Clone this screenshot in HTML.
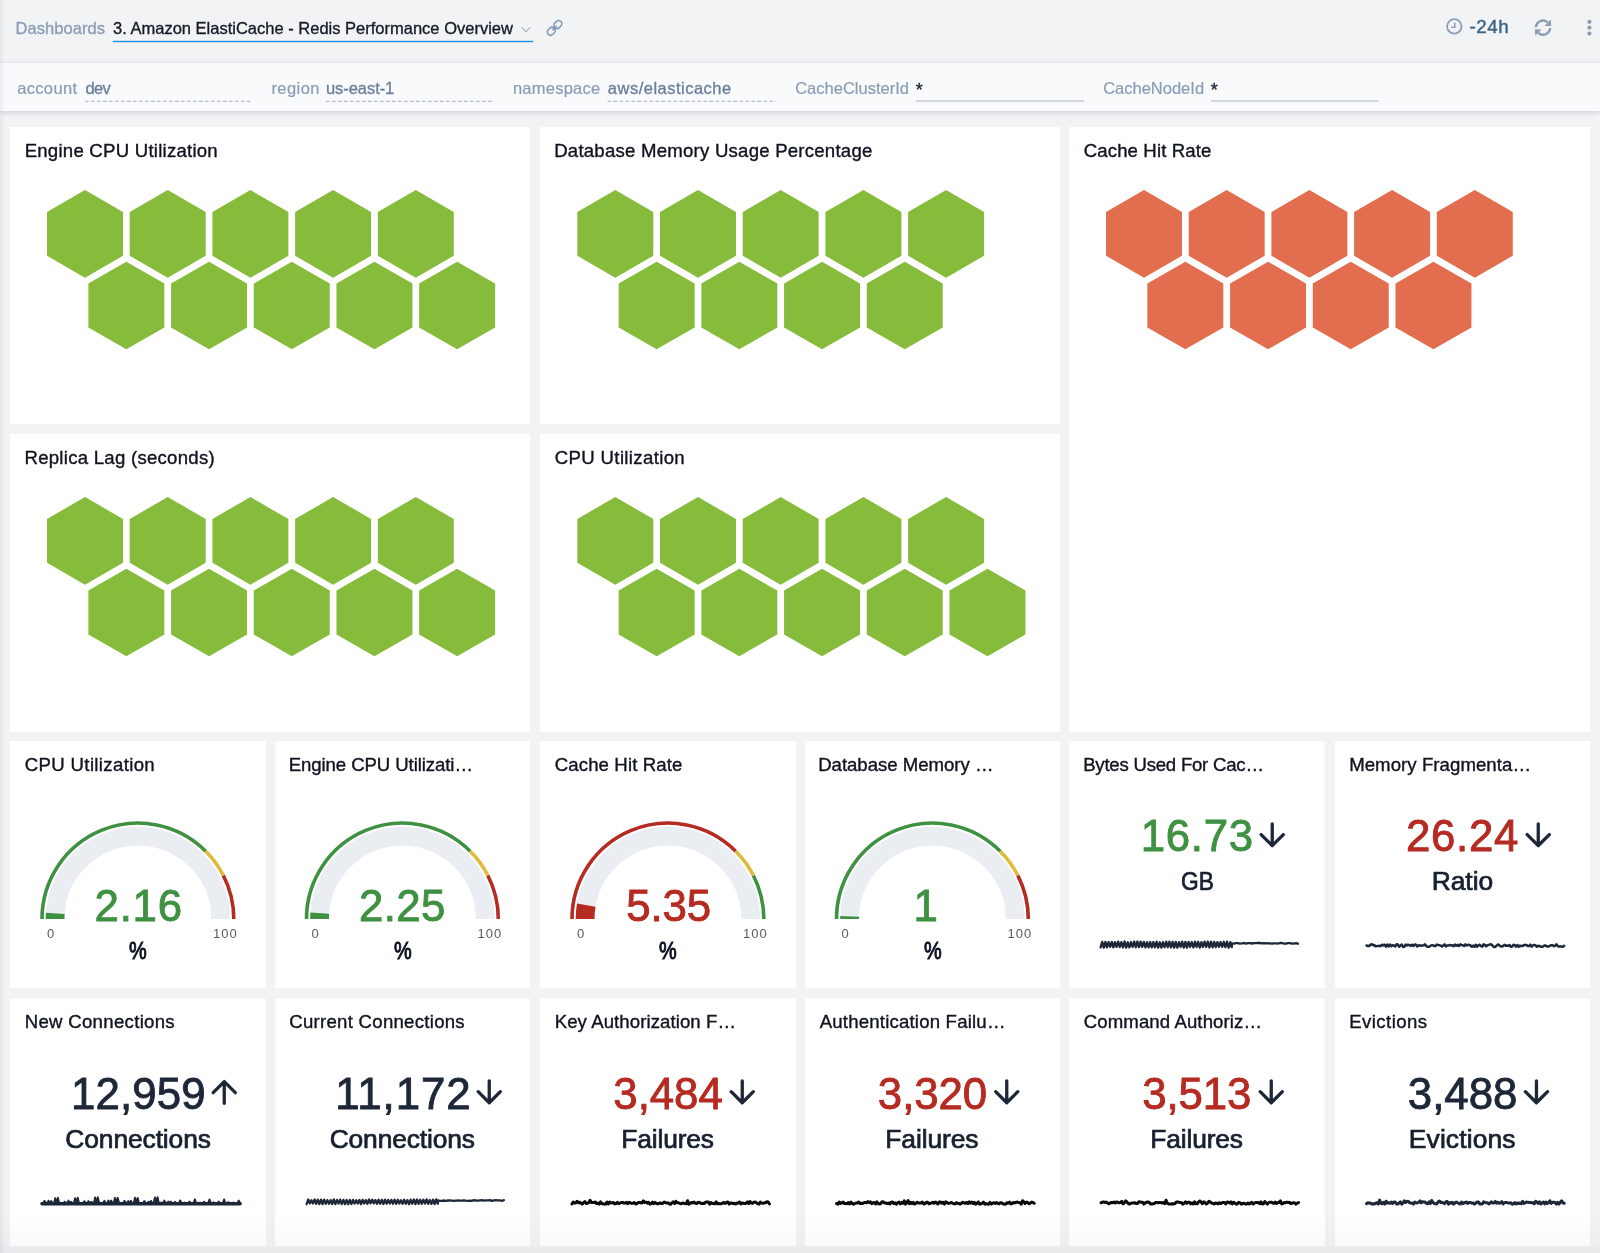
<!DOCTYPE html>
<html lang="en"><head><meta charset="utf-8"><title>3. Amazon ElastiCache - Redis Performance Overview</title>
<style>
*{box-sizing:border-box}
html,body{margin:0;padding:0}
body{width:1600px;height:1253px;overflow:hidden;background:#f1f3f5;font-family:'Liberation Sans', sans-serif;position:relative}
.t{position:absolute;white-space:nowrap;line-height:1;margin:0;font-weight:400}
#app{position:absolute;left:0;top:0;width:1600px;height:1253px;overflow:hidden;will-change:transform}
.topbar{position:absolute;left:0;top:0;width:1600px;height:62px;background:#f2f3f5}
.topbar svg,.filters svg{position:absolute;left:0;top:0;overflow:visible}
.filters{position:absolute;left:0;top:62px;width:1600px;height:49px;background:#f9fafc;border-top:1px solid #e3e7ea;box-shadow:0 1.5px 5px rgba(60,75,90,.21)}
.panel{position:absolute;background:#fff;overflow:hidden}
.r4{box-shadow:0 -1px 0 rgba(255,255,255,.5)}
.r3{box-shadow:0 1px 0 rgba(255,255,255,.35)}
.panel svg{position:absolute;left:0;top:0;overflow:visible}
.edge-l{position:absolute;left:0;top:0;width:5px;height:1253px;background:linear-gradient(90deg,rgba(95,100,110,.085),rgba(95,100,110,0))}
.edge-b{position:absolute;left:0;top:1208px;width:1600px;height:38px;background:linear-gradient(180deg,rgba(120,130,140,0),rgba(120,130,140,.04))}
.foot{position:absolute;left:0;top:1246px;width:1600px;height:7px;background:#e9ebed}
svg{display:block}
</style></head>
<body>
<div id="app">
<section class="panel" style="left:10px;top:127px;width:520px;height:297px">
<h3 class="t" style="left:14.67px;top:15px;font-size:18.6px;color:#10141f;-webkit-text-stroke:0.37px;letter-spacing:0.235px;">Engine CPU Utilization</h3>
<svg width="520" height="297" viewBox="0 0 520 297"><g fill="#87bb3b">
<polygon points="75.00,63.05 112.98,84.98 112.98,128.82 75.00,150.75 37.02,128.82 37.02,84.97"/>
<polygon points="157.70,63.05 195.68,84.98 195.68,128.82 157.70,150.75 119.72,128.82 119.72,84.97"/>
<polygon points="240.40,63.05 278.38,84.98 278.38,128.82 240.40,150.75 202.42,128.82 202.42,84.97"/>
<polygon points="323.10,63.05 361.08,84.98 361.08,128.82 323.10,150.75 285.12,128.82 285.12,84.97"/>
<polygon points="405.80,63.05 443.78,84.98 443.78,128.82 405.80,150.75 367.82,128.82 367.82,84.97"/>
<polygon points="116.35,134.65 154.33,156.57 154.33,200.43 116.35,222.35 78.37,200.43 78.37,156.57"/>
<polygon points="199.05,134.65 237.03,156.57 237.03,200.43 199.05,222.35 161.07,200.43 161.07,156.57"/>
<polygon points="281.75,134.65 319.73,156.57 319.73,200.43 281.75,222.35 243.77,200.43 243.77,156.57"/>
<polygon points="364.45,134.65 402.43,156.57 402.43,200.43 364.45,222.35 326.47,200.43 326.47,156.57"/>
<polygon points="447.15,134.65 485.13,156.57 485.13,200.43 447.15,222.35 409.17,200.43 409.17,156.57"/>
</g></svg>
</section>
<section class="panel" style="left:540px;top:127px;width:520px;height:297px">
<h3 class="t" style="left:14.17px;top:15px;font-size:18.6px;color:#10141f;-webkit-text-stroke:0.37px;letter-spacing:0.228px;">Database Memory Usage Percentage</h3>
<svg width="520" height="297" viewBox="0 0 520 297"><g fill="#87bb3b">
<polygon points="75.30,63.05 113.28,84.98 113.28,128.82 75.30,150.75 37.32,128.82 37.32,84.97"/>
<polygon points="158.00,63.05 195.98,84.98 195.98,128.82 158.00,150.75 120.02,128.82 120.02,84.97"/>
<polygon points="240.70,63.05 278.68,84.98 278.68,128.82 240.70,150.75 202.72,128.82 202.72,84.97"/>
<polygon points="323.40,63.05 361.38,84.98 361.38,128.82 323.40,150.75 285.42,128.82 285.42,84.97"/>
<polygon points="406.10,63.05 444.08,84.98 444.08,128.82 406.10,150.75 368.12,128.82 368.12,84.97"/>
<polygon points="116.65,134.65 154.63,156.57 154.63,200.43 116.65,222.35 78.67,200.43 78.67,156.57"/>
<polygon points="199.35,134.65 237.33,156.57 237.33,200.43 199.35,222.35 161.37,200.43 161.37,156.57"/>
<polygon points="282.05,134.65 320.03,156.57 320.03,200.43 282.05,222.35 244.07,200.43 244.07,156.57"/>
<polygon points="364.75,134.65 402.73,156.57 402.73,200.43 364.75,222.35 326.77,200.43 326.77,156.57"/>
</g></svg>
</section>
<section class="panel" style="left:1069px;top:127px;width:521px;height:605px">
<h3 class="t" style="left:14.76px;top:15px;font-size:18.6px;color:#10141f;-webkit-text-stroke:0.37px;letter-spacing:0.114px;">Cache Hit Rate</h3>
<svg width="521" height="605" viewBox="0 0 521 605"><g fill="#e26e4f">
<polygon points="75.00,63.05 112.98,84.98 112.98,128.82 75.00,150.75 37.02,128.82 37.02,84.97"/>
<polygon points="157.70,63.05 195.68,84.98 195.68,128.82 157.70,150.75 119.72,128.82 119.72,84.97"/>
<polygon points="240.40,63.05 278.38,84.98 278.38,128.82 240.40,150.75 202.42,128.82 202.42,84.97"/>
<polygon points="323.10,63.05 361.08,84.98 361.08,128.82 323.10,150.75 285.12,128.82 285.12,84.97"/>
<polygon points="405.80,63.05 443.78,84.98 443.78,128.82 405.80,150.75 367.82,128.82 367.82,84.97"/>
<polygon points="116.35,134.65 154.33,156.57 154.33,200.43 116.35,222.35 78.37,200.43 78.37,156.57"/>
<polygon points="199.05,134.65 237.03,156.57 237.03,200.43 199.05,222.35 161.07,200.43 161.07,156.57"/>
<polygon points="281.75,134.65 319.73,156.57 319.73,200.43 281.75,222.35 243.77,200.43 243.77,156.57"/>
<polygon points="364.45,134.65 402.43,156.57 402.43,200.43 364.45,222.35 326.47,200.43 326.47,156.57"/>
</g></svg>
</section>
<section class="panel" style="left:10px;top:434px;width:520px;height:298px">
<h3 class="t" style="left:14.47px;top:15px;font-size:18.6px;color:#10141f;-webkit-text-stroke:0.37px;letter-spacing:0.258px;">Replica Lag (seconds)</h3>
<svg width="520" height="298" viewBox="0 0 520 298"><g fill="#87bb3b">
<polygon points="75.00,63.05 112.98,84.98 112.98,128.82 75.00,150.75 37.02,128.82 37.02,84.97"/>
<polygon points="157.70,63.05 195.68,84.98 195.68,128.82 157.70,150.75 119.72,128.82 119.72,84.97"/>
<polygon points="240.40,63.05 278.38,84.98 278.38,128.82 240.40,150.75 202.42,128.82 202.42,84.97"/>
<polygon points="323.10,63.05 361.08,84.98 361.08,128.82 323.10,150.75 285.12,128.82 285.12,84.97"/>
<polygon points="405.80,63.05 443.78,84.98 443.78,128.82 405.80,150.75 367.82,128.82 367.82,84.97"/>
<polygon points="116.35,134.65 154.33,156.57 154.33,200.43 116.35,222.35 78.37,200.43 78.37,156.57"/>
<polygon points="199.05,134.65 237.03,156.57 237.03,200.43 199.05,222.35 161.07,200.43 161.07,156.57"/>
<polygon points="281.75,134.65 319.73,156.57 319.73,200.43 281.75,222.35 243.77,200.43 243.77,156.57"/>
<polygon points="364.45,134.65 402.43,156.57 402.43,200.43 364.45,222.35 326.47,200.43 326.47,156.57"/>
<polygon points="447.15,134.65 485.13,156.57 485.13,200.43 447.15,222.35 409.17,200.43 409.17,156.57"/>
</g></svg>
</section>
<section class="panel" style="left:540px;top:434px;width:520px;height:298px">
<h3 class="t" style="left:14.76px;top:15px;font-size:18.6px;color:#10141f;-webkit-text-stroke:0.37px;letter-spacing:0.352px;">CPU Utilization</h3>
<svg width="520" height="298" viewBox="0 0 520 298"><g fill="#87bb3b">
<polygon points="75.30,63.05 113.28,84.98 113.28,128.82 75.30,150.75 37.32,128.82 37.32,84.97"/>
<polygon points="158.00,63.05 195.98,84.98 195.98,128.82 158.00,150.75 120.02,128.82 120.02,84.97"/>
<polygon points="240.70,63.05 278.68,84.98 278.68,128.82 240.70,150.75 202.72,128.82 202.72,84.97"/>
<polygon points="323.40,63.05 361.38,84.98 361.38,128.82 323.40,150.75 285.42,128.82 285.42,84.97"/>
<polygon points="406.10,63.05 444.08,84.98 444.08,128.82 406.10,150.75 368.12,128.82 368.12,84.97"/>
<polygon points="116.65,134.65 154.63,156.57 154.63,200.43 116.65,222.35 78.67,200.43 78.67,156.57"/>
<polygon points="199.35,134.65 237.33,156.57 237.33,200.43 199.35,222.35 161.37,200.43 161.37,156.57"/>
<polygon points="282.05,134.65 320.03,156.57 320.03,200.43 282.05,222.35 244.07,200.43 244.07,156.57"/>
<polygon points="364.75,134.65 402.73,156.57 402.73,200.43 364.75,222.35 326.77,200.43 326.77,156.57"/>
<polygon points="447.45,134.65 485.43,156.57 485.43,200.43 447.45,222.35 409.47,200.43 409.47,156.57"/>
</g></svg>
</section>
<section class="panel r3" style="left:10px;top:741px;width:256px;height:247px">
<h3 class="t" style="left:14.76px;top:15px;font-size:18.6px;color:#10141f;-webkit-text-stroke:0.37px;letter-spacing:0.352px;">CPU Utilization</h3>
<svg width="256" height="247" viewBox="0 0 256 247">
<path d="M45.10 178.00A82.8 82.8 0 0 1 210.70 178.00" fill="none" stroke="#eaedf1" stroke-width="18.8"/>
<path d="M32.00 178.00A95.9 95.9 0 0 1 195.71 110.19" fill="none" stroke="#3f9142" stroke-width="3.6"/>
<path d="M195.71 110.19A95.9 95.9 0 0 1 213.35 134.46" fill="none" stroke="#dfba3d" stroke-width="3.6"/>
<path d="M213.35 134.46A95.9 95.9 0 0 1 223.80 178.00" fill="none" stroke="#b52a21" stroke-width="3.6"/>
<path d="M45.10 178.00A82.8 82.8 0 0 1 45.29 172.39" fill="none" stroke="#3f9142" stroke-width="18.8"/>
</svg>
<div class="t val" style="left:84.60px;top:143px;font-size:43.8px;color:#3f9142;-webkit-text-stroke:0.88px;letter-spacing:0.726px;">2.16</div>
<div class="t" style="left:36.89px;top:186px;font-size:13px;color:#5a5a5a;">0</div>
<div class="t" style="left:203.01px;top:186px;font-size:13px;color:#5a5a5a;letter-spacing:0.997px;">100</div>
<div class="t" style="left:119.19px;top:198px;font-size:24.6px;color:#0c1120;-webkit-text-stroke:0.98px;transform:scaleX(0.810);transform-origin:0 0;">%</div>
</section>
<section class="panel r3" style="left:275px;top:741px;width:255px;height:247px">
<h3 class="t" style="left:13.67px;top:15px;font-size:18.6px;color:#10141f;-webkit-text-stroke:0.37px;letter-spacing:-0.083px;">Engine CPU Utilizati&hellip;</h3>
<svg width="255" height="247" viewBox="0 0 255 247">
<path d="M44.60 178.00A82.8 82.8 0 0 1 210.20 178.00" fill="none" stroke="#eaedf1" stroke-width="18.8"/>
<path d="M31.50 178.00A95.9 95.9 0 0 1 195.21 110.19" fill="none" stroke="#3f9142" stroke-width="3.6"/>
<path d="M195.21 110.19A95.9 95.9 0 0 1 212.85 134.46" fill="none" stroke="#dfba3d" stroke-width="3.6"/>
<path d="M212.85 134.46A95.9 95.9 0 0 1 223.30 178.00" fill="none" stroke="#b52a21" stroke-width="3.6"/>
<path d="M44.60 178.00A82.8 82.8 0 0 1 44.81 172.15" fill="none" stroke="#3f9142" stroke-width="18.8"/>
</svg>
<div class="t val" style="left:84.10px;top:143px;font-size:43.8px;color:#3f9142;-webkit-text-stroke:0.88px;letter-spacing:0.331px;">2.25</div>
<div class="t" style="left:36.39px;top:186px;font-size:13px;color:#5a5a5a;">0</div>
<div class="t" style="left:202.51px;top:186px;font-size:13px;color:#5a5a5a;letter-spacing:0.997px;">100</div>
<div class="t" style="left:118.69px;top:198px;font-size:24.6px;color:#0c1120;-webkit-text-stroke:0.98px;transform:scaleX(0.810);transform-origin:0 0;">%</div>
</section>
<section class="panel r3" style="left:540px;top:741px;width:256px;height:247px">
<h3 class="t" style="left:14.76px;top:15px;font-size:18.6px;color:#10141f;-webkit-text-stroke:0.37px;letter-spacing:0.114px;">Cache Hit Rate</h3>
<svg width="256" height="247" viewBox="0 0 256 247">
<path d="M45.10 178.00A82.8 82.8 0 0 1 210.70 178.00" fill="none" stroke="#eaedf1" stroke-width="18.8"/>
<path d="M32.00 178.00A95.9 95.9 0 0 1 195.71 110.19" fill="none" stroke="#b52a21" stroke-width="3.6"/>
<path d="M195.71 110.19A95.9 95.9 0 0 1 213.35 134.46" fill="none" stroke="#dfba3d" stroke-width="3.6"/>
<path d="M213.35 134.46A95.9 95.9 0 0 1 223.80 178.00" fill="none" stroke="#3f9142" stroke-width="3.6"/>
<path d="M45.10 178.00A82.8 82.8 0 0 1 46.27 164.15" fill="none" stroke="#b52a21" stroke-width="18.8"/>
</svg>
<div class="t val" style="left:86.15px;top:143px;font-size:43.8px;color:#b52a21;-webkit-text-stroke:0.88px;letter-spacing:-0.086px;">5.35</div>
<div class="t" style="left:36.89px;top:186px;font-size:13px;color:#5a5a5a;">0</div>
<div class="t" style="left:203.01px;top:186px;font-size:13px;color:#5a5a5a;letter-spacing:0.997px;">100</div>
<div class="t" style="left:119.19px;top:198px;font-size:24.6px;color:#0c1120;-webkit-text-stroke:0.98px;transform:scaleX(0.810);transform-origin:0 0;">%</div>
</section>
<section class="panel r3" style="left:805px;top:741px;width:255px;height:247px">
<h3 class="t" style="left:13.17px;top:15px;font-size:18.6px;color:#10141f;-webkit-text-stroke:0.37px;letter-spacing:-0.020px;">Database Memory &hellip;</h3>
<svg width="255" height="247" viewBox="0 0 255 247">
<path d="M44.60 178.00A82.8 82.8 0 0 1 210.20 178.00" fill="none" stroke="#eaedf1" stroke-width="18.8"/>
<path d="M31.50 178.00A95.9 95.9 0 0 1 195.21 110.19" fill="none" stroke="#3f9142" stroke-width="3.6"/>
<path d="M195.21 110.19A95.9 95.9 0 0 1 212.85 134.46" fill="none" stroke="#dfba3d" stroke-width="3.6"/>
<path d="M212.85 134.46A95.9 95.9 0 0 1 223.30 178.00" fill="none" stroke="#b52a21" stroke-width="3.6"/>
<path d="M44.60 178.00A82.8 82.8 0 0 1 44.64 175.40" fill="none" stroke="#3f9142" stroke-width="18.8"/>
</svg>
<div class="t val" style="left:108.56px;top:143px;font-size:43.8px;color:#3f9142;-webkit-text-stroke:0.88px;">1</div>
<div class="t" style="left:36.39px;top:186px;font-size:13px;color:#5a5a5a;">0</div>
<div class="t" style="left:202.51px;top:186px;font-size:13px;color:#5a5a5a;letter-spacing:0.997px;">100</div>
<div class="t" style="left:118.69px;top:198px;font-size:24.6px;color:#0c1120;-webkit-text-stroke:0.98px;transform:scaleX(0.810);transform-origin:0 0;">%</div>
</section>
<section class="panel r3" style="left:1069px;top:741px;width:256px;height:247px">
<h3 class="t" style="left:14.17px;top:15px;font-size:18.6px;color:#10141f;-webkit-text-stroke:0.37px;letter-spacing:-0.229px;">Bytes Used For Cac&hellip;</h3>
<div class="t val" style="left:71.86px;top:73px;font-size:43.8px;color:#3f9142;-webkit-text-stroke:0.88px;letter-spacing:0.638px;">16.73</div>
<svg width="256" height="247" viewBox="0 0 256 247"><path d="M203.25 82.85V104.65M192.15 93.55L203.25 104.65L214.35 93.55" fill="none" stroke="#1d2737" stroke-width="3.3" stroke-linecap="round" stroke-linejoin="round"/><path d="M31.6 206.3L33.2 200.9L34.8 206.6L36.4 200.9L38.0 206.3L39.6 201.0L41.2 206.0L42.8 200.9L44.4 206.4L46.0 201.1L47.6 206.0L49.2 200.7L50.8 206.0L52.4 201.1L54.0 206.5L55.6 200.5L57.2 206.7L58.8 201.3L60.4 206.4L62.0 201.0L63.6 206.0L65.2 200.5L66.8 206.3L68.4 200.5L70.0 206.1L71.6 200.7L73.2 205.9L74.8 200.9L76.4 206.3L78.0 201.2L79.6 206.3L81.2 201.0L82.8 206.3L84.4 201.0L86.0 206.3L87.6 200.7L89.2 206.7L90.8 201.3L92.4 206.6L94.0 201.1L95.6 206.2L97.2 200.7L98.8 206.1L100.4 200.6L102.0 206.5L103.6 200.8L105.2 206.6L106.8 200.8L108.4 206.7L110.0 201.2L111.6 205.9L113.2 200.7L114.8 206.6L116.4 200.9L118.0 206.7L119.6 200.8L121.2 206.0L122.8 201.0L124.4 206.5L126.0 200.7L127.6 206.0L129.2 200.8L130.8 206.7L132.4 201.1L134.0 206.0L135.6 200.7L137.2 206.0L138.8 200.5L140.4 206.5L142.0 200.6L143.6 206.3L145.2 200.9L146.8 206.1L148.4 201.1L150.0 206.0L151.6 201.0L153.2 206.0L154.8 200.8L156.4 206.1L158.0 200.7L159.6 206.7L161.2 201.1L162.8 206.1L162.9 202.3L164.9 202.6L166.9 202.1L168.9 202.2L170.9 202.6L172.9 202.4L174.9 202.0L176.9 202.7L178.9 202.1L180.9 202.1L182.9 202.5L184.9 202.2L186.9 202.1L188.9 202.0L190.9 202.0L192.9 202.4L194.9 202.1L196.9 202.4L198.9 202.2L200.9 202.3L202.9 202.7L204.9 202.3L206.9 202.4L208.9 202.6L210.9 202.0L212.9 202.0L214.9 202.6L216.9 202.6L218.9 202.1L220.9 202.1L222.9 202.5L224.9 202.7L226.9 202.1L228.9 202.7" fill="none" stroke="#1d2737" stroke-width="2.3" stroke-linejoin="round" stroke-linecap="round"/></svg>
<div class="t unit" style="left:111.56px;top:127px;font-size:26.4px;color:#18202f;-webkit-text-stroke:0.74px;transform:scaleX(0.861);transform-origin:0 0;">GB</div>
</section>
<section class="panel r3" style="left:1335px;top:741px;width:255px;height:247px">
<h3 class="t" style="left:14.17px;top:15px;font-size:18.6px;color:#10141f;-webkit-text-stroke:0.37px;letter-spacing:0.064px;">Memory Fragmenta&hellip;</h3>
<div class="t val" style="left:71.00px;top:73px;font-size:43.8px;color:#b52a21;-webkit-text-stroke:0.88px;letter-spacing:0.694px;">26.24</div>
<svg width="255" height="247" viewBox="0 0 255 247"><path d="M203.25 82.85V104.65M192.15 93.55L203.25 104.65L214.35 93.55" fill="none" stroke="#1d2737" stroke-width="3.3" stroke-linecap="round" stroke-linejoin="round"/><path d="M31.6 204.5L32.9 205.0L34.2 205.0L35.5 203.7L36.8 203.3L38.1 204.3L39.4 204.0L40.7 205.4L42.0 205.1L43.3 204.9L44.6 204.8L45.9 205.0L47.2 203.7L48.5 204.4L49.8 203.7L51.1 205.7L52.4 203.5L53.7 205.4L55.0 203.5L56.3 205.1L57.6 204.2L58.9 204.4L60.2 205.5L61.5 203.3L62.8 203.5L64.1 205.7L65.4 204.6L66.7 203.5L68.0 205.9L69.3 205.8L70.6 203.6L71.9 204.4L73.2 203.7L74.5 204.1L75.8 204.9L77.1 203.7L78.4 205.1L79.7 203.4L81.0 203.7L82.3 205.4L83.6 204.3L84.9 204.4L86.2 204.8L87.5 204.5L88.8 204.3L90.1 203.4L91.4 205.2L92.7 205.8L94.0 205.8L95.3 205.0L96.6 204.2L97.9 204.2L99.2 205.1L100.5 205.1L101.8 203.6L103.1 203.9L104.4 204.2L105.7 204.6L107.0 205.4L108.3 204.6L109.6 203.4L110.9 205.4L112.2 204.4L113.5 204.6L114.8 203.9L116.1 204.4L117.4 204.3L118.7 205.3L120.0 203.6L121.3 204.7L122.6 203.8L123.9 205.1L125.2 203.4L126.5 204.0L127.8 204.2L129.1 205.0L130.4 203.4L131.7 204.5L133.0 203.8L134.3 204.0L135.6 204.5L136.9 205.8L138.2 204.6L139.5 205.8L140.8 203.7L142.1 205.7L143.4 204.2L144.7 203.8L146.0 205.2L147.3 205.7L148.6 203.3L149.9 204.0L151.2 205.3L152.5 204.2L153.8 203.9L155.1 203.3L156.4 203.4L157.7 204.9L159.0 205.9L160.3 205.9L161.6 204.6L162.9 203.4L164.2 204.1L165.5 205.3L166.8 205.5L168.1 205.0L169.4 203.9L170.7 204.7L172.0 204.5L173.3 204.9L174.6 204.0L175.9 205.8L177.2 205.6L178.5 203.7L179.8 204.1L181.1 205.6L182.4 204.0L183.7 205.8L185.0 204.6L186.3 205.1L187.6 205.1L188.9 203.9L190.2 204.0L191.5 204.0L192.8 205.1L194.1 205.1L195.4 203.6L196.7 205.6L198.0 204.4L199.3 203.9L200.6 204.4L201.9 205.8L203.2 204.8L204.5 204.9L205.8 205.7L207.1 205.8L208.4 205.3L209.7 204.4L211.0 204.8L212.3 205.6L213.6 205.4L214.9 204.8L216.2 204.2L217.5 204.3L218.8 205.2L220.1 204.8L221.4 203.3L222.7 205.1L224.0 205.6L225.3 205.4L226.6 205.6L227.9 205.7L229.2 204.7" fill="none" stroke="#1d2737" stroke-width="2.5" stroke-linejoin="round" stroke-linecap="round"/></svg>
<div class="t unit" style="left:96.63px;top:127px;font-size:26.4px;color:#18202f;-webkit-text-stroke:0.74px;letter-spacing:-0.009px;">Ratio</div>
</section>
<section class="panel r4" style="left:10px;top:999px;width:256px;height:247px">
<h3 class="t" style="left:14.67px;top:14px;font-size:18.6px;color:#10141f;-webkit-text-stroke:0.37px;letter-spacing:0.305px;">New Connections</h3>
<div class="t val" style="left:61.06px;top:73px;font-size:43.8px;color:#1d2737;-webkit-text-stroke:0.88px;letter-spacing:0.108px;">12,959</div>
<svg width="256" height="247" viewBox="0 0 256 247"><path d="M214.25 104.35V82.55M203.15 93.65L214.25 82.55L225.35 93.65" fill="none" stroke="#1d2737" stroke-width="3.3" stroke-linecap="round" stroke-linejoin="round"/><path d="M31.9 204.8H230.2" fill="none" stroke="#1d2737" stroke-width="3.4" stroke-linecap="round"/><path d="M31.9 204.6L33.2 204.0L34.6 201.9L35.9 204.3L37.2 204.6L38.5 201.7L39.9 203.9L41.2 202.1L42.5 204.2L43.9 204.5L45.2 199.2L46.5 204.4L47.9 198.6L49.2 204.7L50.5 203.9L51.8 204.5L53.2 204.5L54.5 202.7L55.8 203.7L57.2 204.0L58.5 201.6L59.8 204.1L61.2 202.8L62.5 204.4L63.8 204.3L65.1 199.1L66.5 203.8L67.8 198.8L69.1 204.6L70.5 203.9L71.8 204.7L73.1 203.8L74.5 202.2L75.8 204.2L77.1 204.4L78.4 202.1L79.8 204.6L81.1 202.7L82.4 203.8L83.8 204.5L85.1 198.4L86.4 204.6L87.8 198.2L89.1 203.8L90.4 204.0L91.7 204.0L93.1 204.2L94.4 201.8L95.7 204.7L97.1 204.3L98.4 201.6L99.7 204.6L101.1 201.5L102.4 203.8L103.7 204.3L105.0 198.8L106.4 204.3L107.7 198.8L109.0 203.7L110.4 204.4L111.7 204.8L113.0 204.7L114.4 201.8L115.7 203.7L117.0 204.3L118.3 202.1L119.7 204.2L121.0 201.8L122.3 204.6L123.7 204.1L125.0 198.6L126.3 204.1L127.7 199.0L129.0 204.6L130.3 204.4L131.6 203.8L133.0 204.4L134.3 202.0L135.6 204.5L137.0 204.7L138.3 202.7L139.6 203.9L141.0 201.7L142.3 204.4L143.6 204.0L145.0 198.5L146.3 203.8L147.6 198.2L148.9 204.4L150.3 203.7L151.6 203.7L152.9 204.2L154.3 201.6L155.6 204.3L156.9 204.4L158.3 202.5L159.6 203.8L160.9 202.6L162.2 204.7L163.6 204.1L164.9 202.8L166.2 204.4L167.6 204.0L168.9 204.8L170.2 201.4L171.6 204.5L172.9 204.4L174.2 203.4L175.5 204.7L176.9 204.5L178.2 204.0L179.5 202.6L180.9 204.1L182.2 204.4L183.5 204.6L184.9 200.3L186.2 204.3L187.5 204.1L188.8 203.6L190.2 204.6L191.5 204.0L192.8 204.1L194.2 202.7L195.5 204.3L196.8 204.4L198.2 204.3L199.5 200.4L200.8 204.5L202.1 204.3L203.5 203.3L204.8 204.1L206.1 204.8L207.5 204.2L208.8 202.6L210.1 204.8L211.5 204.3L212.8 204.2L214.1 200.4L215.4 204.3L216.8 204.6L218.1 203.2L219.4 203.9L220.8 204.0L222.1 204.7L223.4 203.5L224.8 204.7L226.1 204.8L227.4 204.4L228.7 201.6L230.1 204.0" fill="none" stroke="#1d2737" stroke-width="1.9" stroke-linejoin="round" stroke-linecap="round"/></svg>
<div class="t unit" style="left:55.36px;top:127px;font-size:26.4px;color:#18202f;-webkit-text-stroke:0.74px;letter-spacing:-0.112px;">Connections</div>
</section>
<section class="panel r4" style="left:275px;top:999px;width:255px;height:247px">
<h3 class="t" style="left:14.26px;top:14px;font-size:18.6px;color:#10141f;-webkit-text-stroke:0.37px;letter-spacing:0.271px;">Current Connections</h3>
<div class="t val" style="left:60.16px;top:73px;font-size:43.8px;color:#1d2737;-webkit-text-stroke:0.88px;letter-spacing:0.964px;">11,172</div>
<svg width="255" height="247" viewBox="0 0 255 247"><path d="M214.25 81.95V103.75M203.15 92.65L214.25 103.75L225.35 92.65" fill="none" stroke="#1d2737" stroke-width="3.3" stroke-linecap="round" stroke-linejoin="round"/><path d="M31.6 205.2L33.2 200.5L34.8 204.4L36.4 201.2L38.0 204.5L39.6 200.5L41.2 204.9L42.8 200.7L44.4 205.1L46.0 200.6L47.6 205.2L49.2 200.7L50.8 204.9L52.4 201.1L54.0 204.9L55.6 201.1L57.2 205.0L58.8 200.4L60.4 205.1L62.0 200.9L63.6 204.6L65.2 200.6L66.8 205.1L68.4 200.9L70.0 205.2L71.6 201.0L73.2 205.2L74.8 200.9L76.4 205.0L78.0 200.9L79.6 204.6L81.2 201.2L82.8 204.6L84.4 201.0L86.0 205.2L87.6 200.9L89.2 204.5L90.8 201.1L92.4 204.9L94.0 200.5L95.6 204.4L97.2 200.8L98.8 204.4L100.4 201.1L102.0 204.8L103.6 200.8L105.2 204.7L106.8 200.9L108.4 205.1L110.0 200.6L111.6 204.7L113.2 200.9L114.8 204.6L116.4 200.9L118.0 204.8L119.6 200.7L121.2 204.9L122.8 200.8L124.4 204.5L126.0 201.2L127.6 204.7L129.2 200.7L130.8 204.7L132.4 201.1L134.0 205.2L135.6 200.8L137.2 204.7L138.8 200.5L140.4 205.1L142.0 200.5L143.6 204.8L145.2 200.7L146.8 204.7L148.4 200.7L150.0 204.6L151.6 200.4L153.2 204.8L154.8 201.0L156.4 204.9L158.0 200.6L159.6 205.0L161.2 200.4L162.8 204.7L162.9 201.5L164.9 201.8L166.9 201.8L168.9 201.5L170.9 201.8L172.9 201.5L174.9 201.5L176.9 201.6L178.9 201.9L180.9 201.7L182.9 201.5L184.9 201.7L186.9 201.6L188.9 201.4L190.9 201.7L192.9 201.8L194.9 201.6L196.9 201.9L198.9 201.1L200.9 201.5L202.9 201.6L204.9 201.4L206.9 201.2L208.9 201.7L210.9 201.4L212.9 201.3L214.9 201.1L216.9 201.9L218.9 201.4L220.9 201.2L222.9 201.3L224.9 201.3L226.9 201.8L228.9 201.2" fill="none" stroke="#1d2737" stroke-width="2.3" stroke-linejoin="round" stroke-linecap="round"/></svg>
<div class="t unit" style="left:54.66px;top:127px;font-size:26.4px;color:#18202f;-webkit-text-stroke:0.74px;letter-spacing:-0.142px;">Connections</div>
</section>
<section class="panel r4" style="left:540px;top:999px;width:256px;height:247px">
<h3 class="t" style="left:14.67px;top:14px;font-size:18.6px;color:#10141f;-webkit-text-stroke:0.37px;letter-spacing:0.080px;">Key Authorization F&hellip;</h3>
<div class="t val" style="left:73.33px;top:73px;font-size:43.8px;color:#b52a21;-webkit-text-stroke:0.88px;letter-spacing:-0.040px;">3,484</div>
<svg width="256" height="247" viewBox="0 0 256 247"><path d="M202.25 81.95V103.75M191.15 92.65L202.25 103.75L213.35 92.65" fill="none" stroke="#1d2737" stroke-width="3.3" stroke-linecap="round" stroke-linejoin="round"/><path d="M31.9 205.0L33.2 203.0L34.5 204.1L35.8 203.9L37.1 202.3L38.4 203.8L39.7 203.2L41.0 204.2L42.3 205.1L43.6 203.7L44.9 202.5L46.2 204.5L47.5 204.3L48.8 203.6L50.1 201.2L51.4 203.5L52.7 203.6L54.0 203.5L55.3 203.0L56.6 204.5L57.9 204.1L59.2 205.1L60.5 202.9L61.8 204.7L63.1 204.7L64.4 205.2L65.7 205.1L67.0 203.0L68.3 205.0L69.6 203.0L70.9 204.1L72.2 203.8L73.5 203.6L74.8 204.9L76.1 204.5L77.4 203.4L78.7 204.7L80.0 204.0L81.3 203.6L82.6 203.4L83.9 204.1L85.2 204.1L86.5 203.3L87.8 204.7L89.1 203.3L90.4 203.9L91.7 204.5L93.0 204.1L94.3 203.5L95.6 204.9L96.9 204.7L98.2 203.5L99.5 203.5L100.8 203.7L102.1 203.9L103.4 201.9L104.7 203.4L106.0 203.1L107.3 204.2L108.6 203.4L109.9 205.2L111.2 204.7L112.5 203.2L113.8 204.6L115.1 203.3L116.4 204.4L117.7 205.0L119.0 204.3L120.3 203.9L121.6 204.6L122.9 204.2L124.2 203.0L125.5 203.8L126.8 204.1L128.1 203.7L129.4 205.0L130.7 205.2L132.0 203.7L133.3 202.9L134.6 204.6L135.9 202.4L137.2 203.8L138.5 203.8L139.8 204.4L141.1 204.8L142.4 204.1L143.7 204.3L145.0 204.4L146.3 204.8L147.6 201.7L148.9 205.1L150.2 204.4L151.5 203.4L152.8 204.0L154.1 203.0L155.4 204.3L156.7 204.6L158.0 203.3L159.3 203.4L160.6 204.1L161.9 204.7L163.2 204.2L164.5 204.5L165.8 203.1L167.1 203.1L168.4 203.0L169.7 205.1L171.0 203.5L172.3 204.4L173.6 204.6L174.9 204.8L176.2 202.9L177.5 204.8L178.8 204.6L180.1 204.7L181.4 204.7L182.7 204.0L184.0 203.5L185.3 204.4L186.6 203.3L187.9 203.1L189.2 205.1L190.5 204.0L191.8 204.1L193.1 204.7L194.4 204.2L195.7 205.1L197.0 204.0L198.3 204.0L199.6 203.0L200.9 204.9L202.2 204.1L203.5 204.2L204.8 204.6L206.1 204.3L207.4 202.9L208.7 204.6L210.0 202.5L211.3 204.0L212.6 204.4L213.9 203.2L215.2 202.9L216.5 203.9L217.8 204.7L219.1 205.1L220.4 203.1L221.7 204.1L223.0 204.3L224.3 203.8L225.6 203.8L226.9 202.8L228.2 203.0L229.5 205.0" fill="none" stroke="#0a0a0c" stroke-width="3.0" stroke-linejoin="round" stroke-linecap="round"/></svg>
<div class="t unit" style="left:81.33px;top:127px;font-size:26.4px;color:#18202f;-webkit-text-stroke:0.74px;letter-spacing:-0.179px;">Failures</div>
</section>
<section class="panel r4" style="left:805px;top:999px;width:255px;height:247px">
<h3 class="t" style="left:14.66px;top:14px;font-size:18.6px;color:#10141f;-webkit-text-stroke:0.37px;letter-spacing:0.197px;">Authentication Failu&hellip;</h3>
<div class="t val" style="left:72.83px;top:73px;font-size:43.8px;color:#b52a21;-webkit-text-stroke:0.88px;letter-spacing:-0.058px;">3,320</div>
<svg width="255" height="247" viewBox="0 0 255 247"><path d="M201.75 81.95V103.75M190.65 92.65L201.75 103.75L212.85 92.65" fill="none" stroke="#1d2737" stroke-width="3.3" stroke-linecap="round" stroke-linejoin="round"/><path d="M31.6 204.5L32.9 205.2L34.2 203.0L35.5 204.5L36.8 203.9L38.1 203.1L39.4 204.6L40.7 204.6L42.0 204.8L43.3 203.5L44.6 204.9L45.9 203.1L47.2 204.4L48.5 205.2L49.8 204.6L51.1 204.0L52.4 204.0L53.7 203.1L55.0 204.6L56.3 204.3L57.6 204.4L58.9 203.8L60.2 203.4L61.5 203.8L62.8 202.6L64.1 203.6L65.4 202.9L66.7 204.7L68.0 203.8L69.3 203.5L70.6 205.0L71.9 202.8L73.2 204.5L74.5 205.0L75.8 204.6L77.1 202.7L78.4 203.0L79.7 204.1L81.0 203.9L82.3 204.6L83.6 204.1L84.9 205.0L86.2 203.2L87.5 203.0L88.8 204.5L90.1 203.9L91.4 205.2L92.7 203.6L94.0 203.1L95.3 204.9L96.6 203.4L97.9 204.3L99.2 201.9L100.5 205.2L101.8 203.6L103.1 201.5L104.4 204.8L105.7 203.4L107.0 204.6L108.3 203.4L109.6 205.1L110.9 204.2L112.2 203.3L113.5 204.0L114.8 203.9L116.1 203.9L117.4 203.1L118.7 204.9L120.0 204.8L121.3 203.3L122.6 203.3L123.9 204.8L125.2 204.3L126.5 204.0L127.8 203.2L129.1 204.3L130.4 203.0L131.7 204.0L133.0 205.0L134.3 202.9L135.6 203.1L136.9 204.3L138.2 203.3L139.5 205.1L140.8 202.8L142.1 203.5L143.4 204.4L144.7 204.1L146.0 203.5L147.3 204.0L148.6 204.6L149.9 205.0L151.2 203.7L152.5 204.3L153.8 204.4L155.1 205.1L156.4 204.3L157.7 203.3L159.0 203.8L160.3 204.2L161.6 203.5L162.9 204.5L164.2 202.8L165.5 204.1L166.8 203.1L168.1 204.6L169.4 203.3L170.7 205.1L172.0 204.3L173.3 202.9L174.6 205.2L175.9 204.9L177.2 204.2L178.5 203.2L179.8 205.2L181.1 204.6L182.4 205.0L183.7 205.2L185.0 203.4L186.3 205.0L187.6 204.2L188.9 203.7L190.2 204.4L191.5 203.6L192.8 204.4L194.1 204.9L195.4 203.7L196.7 203.8L198.0 204.9L199.3 205.1L200.6 205.2L201.9 203.8L203.2 204.2L204.5 203.0L205.8 204.9L207.1 204.5L208.4 203.4L209.7 204.0L211.0 203.3L212.3 203.1L213.6 203.6L214.9 203.8L216.2 205.2L217.5 201.7L218.8 202.9L220.1 204.5L221.4 203.1L222.7 203.5L224.0 204.8L225.3 204.2L226.6 203.1L227.9 203.5L229.2 204.3" fill="none" stroke="#0a0a0c" stroke-width="3.0" stroke-linejoin="round" stroke-linecap="round"/></svg>
<div class="t unit" style="left:80.33px;top:127px;font-size:26.4px;color:#18202f;-webkit-text-stroke:0.74px;letter-spacing:-0.108px;">Failures</div>
</section>
<section class="panel r4" style="left:1069px;top:999px;width:256px;height:247px">
<h3 class="t" style="left:14.76px;top:14px;font-size:18.6px;color:#10141f;-webkit-text-stroke:0.37px;letter-spacing:0.097px;">Command Authoriz&hellip;</h3>
<div class="t val" style="left:73.33px;top:73px;font-size:43.8px;color:#b52a21;-webkit-text-stroke:0.88px;letter-spacing:-0.129px;">3,513</div>
<svg width="256" height="247" viewBox="0 0 256 247"><path d="M202.25 81.95V103.75M191.15 92.65L202.25 103.75L213.35 92.65" fill="none" stroke="#1d2737" stroke-width="3.3" stroke-linecap="round" stroke-linejoin="round"/><path d="M32.0 203.7L33.3 203.3L34.6 202.9L35.9 203.5L37.2 203.1L38.5 204.0L39.8 204.8L41.1 203.9L42.4 203.5L43.7 203.8L45.0 203.0L46.3 204.0L47.6 202.9L48.9 203.3L50.2 203.8L51.5 203.6L52.8 202.3L54.1 204.8L55.4 203.9L56.7 201.9L58.0 203.0L59.3 204.6L60.6 205.1L61.9 204.2L63.2 203.9L64.5 203.9L65.8 203.7L67.1 204.6L68.4 204.5L69.7 202.8L71.0 203.0L72.3 203.3L73.6 203.2L74.9 205.1L76.2 203.8L77.5 203.2L78.8 203.0L80.1 203.3L81.4 204.9L82.7 205.0L84.0 204.7L85.3 204.5L86.6 203.5L87.9 203.5L89.2 203.8L90.5 203.5L91.8 203.6L93.1 204.0L94.4 203.5L95.7 204.7L97.0 201.2L98.3 204.2L99.6 204.9L100.9 204.9L102.2 205.1L103.5 204.8L104.8 204.9L106.1 204.5L107.4 202.9L108.7 203.0L110.0 203.2L111.3 203.4L112.6 203.7L113.9 205.2L115.2 204.1L116.5 202.9L117.8 204.3L119.1 203.2L120.4 203.3L121.7 204.9L123.0 203.9L124.3 205.0L125.6 202.9L126.9 204.6L128.2 204.8L129.5 202.9L130.8 202.0L132.1 203.1L133.4 204.7L134.7 202.9L136.0 203.4L137.3 204.9L138.6 204.1L139.9 202.3L141.2 202.9L142.5 204.0L143.8 204.3L145.1 205.0L146.4 204.0L147.7 204.2L149.0 204.8L150.3 203.8L151.6 204.6L152.9 203.9L154.2 203.4L155.5 203.5L156.8 204.9L158.1 203.0L159.4 203.2L160.7 204.1L162.0 202.9L163.3 204.9L164.6 203.2L165.9 204.1L167.2 205.2L168.5 204.9L169.8 203.3L171.1 203.8L172.4 205.1L173.7 204.4L175.0 204.2L176.3 205.1L177.6 205.0L178.9 204.1L180.2 205.0L181.5 204.1L182.8 203.3L184.1 205.1L185.4 203.9L186.7 203.6L188.0 203.6L189.3 203.6L190.6 204.7L191.9 202.9L193.2 204.9L194.5 204.8L195.8 202.6L197.1 203.9L198.4 205.1L199.7 203.7L201.0 203.2L202.3 203.2L203.6 203.8L204.9 204.4L206.2 203.1L207.5 204.4L208.8 203.6L210.1 203.5L211.4 201.9L212.7 204.9L214.0 204.5L215.3 203.6L216.6 203.7L217.9 203.1L219.2 203.6L220.5 203.3L221.8 204.6L223.1 204.3L224.4 203.6L225.7 203.9L227.0 205.2L228.3 204.1L229.6 203.6" fill="none" stroke="#0a0a0c" stroke-width="3.0" stroke-linejoin="round" stroke-linecap="round"/></svg>
<div class="t unit" style="left:81.33px;top:127px;font-size:26.4px;color:#18202f;-webkit-text-stroke:0.74px;letter-spacing:-0.179px;">Failures</div>
</section>
<section class="panel r4" style="left:1335px;top:999px;width:255px;height:247px">
<h3 class="t" style="left:14.17px;top:14px;font-size:18.6px;color:#10141f;-webkit-text-stroke:0.37px;letter-spacing:0.449px;">Evictions</h3>
<div class="t val" style="left:72.83px;top:73px;font-size:43.8px;color:#1d2737;-webkit-text-stroke:0.88px;letter-spacing:-0.009px;">3,488</div>
<svg width="255" height="247" viewBox="0 0 255 247"><path d="M201.45 81.95V103.75M190.35 92.65L201.45 103.75L212.55 92.65" fill="none" stroke="#1d2737" stroke-width="3.3" stroke-linecap="round" stroke-linejoin="round"/><path d="M31.6 204.6L32.9 203.8L34.2 204.0L35.5 204.0L36.8 205.2L38.1 204.7L39.4 205.1L40.7 204.2L42.0 203.7L43.3 205.1L44.6 201.1L45.9 204.2L47.2 204.8L48.5 203.3L49.8 205.1L51.1 202.2L52.4 204.1L53.7 203.8L55.0 204.3L56.3 203.1L57.6 204.5L58.9 203.0L60.2 203.1L61.5 205.0L62.8 205.0L64.1 203.9L65.4 202.9L66.7 205.1L68.0 203.9L69.3 201.7L70.6 203.5L71.9 202.4L73.2 202.2L74.5 203.7L75.8 204.0L77.1 204.1L78.4 205.1L79.7 203.1L81.0 203.8L82.3 204.0L83.6 203.3L84.9 201.9L86.2 203.8L87.5 202.8L88.8 203.0L90.1 203.1L91.4 204.3L92.7 204.7L94.0 202.9L95.3 204.6L96.6 201.5L97.9 203.3L99.2 204.5L100.5 204.7L101.8 205.1L103.1 202.9L104.4 202.1L105.7 203.5L107.0 203.3L108.3 203.9L109.6 204.6L110.9 202.8L112.2 202.6L113.5 205.2L114.8 203.5L116.1 204.3L117.4 203.3L118.7 205.1L120.0 203.8L121.3 203.0L122.6 203.7L123.9 204.5L125.2 205.0L126.5 203.1L127.8 204.7L129.1 203.5L130.4 203.9L131.7 203.0L133.0 204.4L134.3 203.4L135.6 203.5L136.9 204.2L138.2 204.0L139.5 205.1L140.8 204.1L142.1 203.0L143.4 202.9L144.7 204.9L146.0 204.9L147.3 204.9L148.6 202.8L149.9 203.5L151.2 203.7L152.5 203.7L153.8 205.0L155.1 204.1L156.4 202.8L157.7 203.9L159.0 204.1L160.3 202.4L161.6 204.2L162.9 203.3L164.2 204.3L165.5 203.8L166.8 202.7L168.1 204.9L169.4 203.7L170.7 203.6L172.0 203.5L173.3 204.1L174.6 203.9L175.9 203.8L177.2 205.2L178.5 204.9L179.8 203.6L181.1 204.9L182.4 204.0L183.7 204.5L185.0 204.0L186.3 204.8L187.6 202.4L188.9 204.5L190.2 203.7L191.5 203.0L192.8 203.2L194.1 203.4L195.4 203.4L196.7 203.9L198.0 203.6L199.3 204.8L200.6 202.4L201.9 203.1L203.2 204.5L204.5 202.8L205.8 205.0L207.1 204.1L208.4 203.0L209.7 204.8L211.0 203.0L212.3 204.4L213.6 203.6L214.9 201.8L216.2 204.4L217.5 203.3L218.8 203.2L220.1 203.5L221.4 205.1L222.7 203.4L224.0 205.1L225.3 203.2L226.6 201.8L227.9 203.9L229.2 204.3" fill="none" stroke="#1d2737" stroke-width="3.0" stroke-linejoin="round" stroke-linecap="round"/></svg>
<div class="t unit" style="left:73.83px;top:127px;font-size:26.4px;color:#18202f;-webkit-text-stroke:0.74px;letter-spacing:0.126px;">Evictions</div>
</section>
<div class="edge-b"></div><div class="foot"></div>
<header class="topbar">
<span class="t" style="left:15.55px;top:20px;font-size:16.5px;color:#8a9db5;-webkit-text-stroke:0.33px;letter-spacing:0.052px;">Dashboards</span>
<h1 class="t" style="left:113.07px;top:20px;font-size:16.5px;color:#141a26;-webkit-text-stroke:0.33px;">3. Amazon ElastiCache - Redis Performance Overview</h1>
<svg width="1600" height="62" viewBox="0 0 1600 62">
<rect x="112.7" y="40.8" width="420.5" height="1.4" fill="#1b8fe0"/>
<path d="M521.8 27.4L526 31.7L530.2 27.4" fill="none" stroke="#a3b2c6" stroke-width="1.1"/>
<g fill="none" stroke="#7f96b5" stroke-width="1.5">
<rect x="-4.3" y="-3.2" width="8.6" height="6.4" rx="3.2" transform="translate(557.9 24.6) rotate(-45)"/>
<rect x="-4.3" y="-3.2" width="8.6" height="6.4" rx="3.2" transform="translate(551.3 31.2) rotate(-45)"/>
<path d="M552.4 30.1L556.8 25.7"/>
</g>
<circle cx="1454.3" cy="26.4" r="7.2" fill="none" stroke="#8a9db5" stroke-width="1.8"/>
<path d="M1454.8 22.4V27.3H1451.2" fill="none" stroke="#8a9db5" stroke-width="1.5"/>
<g><path d="M1536.00 27.25A7.05 7.05 0 0 1 1547.77 22.41" fill="none" stroke="#8a9db5" stroke-width="2.5"/><path d="M1550.7 19.6L1551.3 26.1L1544.6 25.9Z" fill="#8a9db5"/></g><g transform="rotate(180 1543.05 27.65)"><path d="M1536.00 27.25A7.05 7.05 0 0 1 1547.77 22.41" fill="none" stroke="#8a9db5" stroke-width="2.5"/><path d="M1550.7 19.6L1551.3 26.1L1544.6 25.9Z" fill="#8a9db5"/></g>
<circle cx="1589.4" cy="21.8" r="2.1" fill="#8a9db5"/><circle cx="1589.4" cy="27.7" r="2.1" fill="#8a9db5"/><circle cx="1589.4" cy="33.6" r="2.1" fill="#8a9db5"/>
</svg>
<span class="t" style="left:1469.56px;top:18px;font-size:18.8px;color:#3a6286;-webkit-text-stroke:0.38px;letter-spacing:0.554px;">-24h</span>
</header>
<div class="filters">
<label class="t" style="left:17.20px;top:17px;font-size:16.5px;color:#8a9db5;-webkit-text-stroke:0.20px;letter-spacing:0.337px;">account</label>
<span class="t" style="left:85.61px;top:17px;font-size:16.5px;color:#6b7f9c;-webkit-text-stroke:0.33px;letter-spacing:-0.780px;">dev</span>
<label class="t" style="left:271.40px;top:17px;font-size:16.5px;color:#8a9db5;-webkit-text-stroke:0.20px;letter-spacing:0.458px;">region</label>
<span class="t" style="left:325.93px;top:17px;font-size:16.5px;color:#6b7f9c;-webkit-text-stroke:0.33px;letter-spacing:-0.051px;">us-east-1</span>
<label class="t" style="left:512.90px;top:17px;font-size:16.5px;color:#8a9db5;-webkit-text-stroke:0.20px;letter-spacing:0.252px;">namespace</label>
<span class="t" style="left:607.80px;top:17px;font-size:16.5px;color:#6b7f9c;-webkit-text-stroke:0.33px;letter-spacing:0.496px;">aws/elasticache</span>
<label class="t" style="left:795.16px;top:17px;font-size:16.5px;color:#8a9db5;-webkit-text-stroke:0.20px;letter-spacing:0.013px;">CacheClusterId</label>
<span class="t" style="left:915.71px;top:18px;font-size:18px;color:#1d2333;-webkit-text-stroke:0.36px;">*</span>
<label class="t" style="left:1103.16px;top:17px;font-size:16.5px;color:#8a9db5;-webkit-text-stroke:0.20px;">CacheNodeId</label>
<span class="t" style="left:1210.71px;top:18px;font-size:18px;color:#1d2333;-webkit-text-stroke:0.36px;">*</span>
<svg width="1600" height="48" viewBox="0 0 1600 48">
<path d="M85 38.3H253" stroke="#b3bfce" stroke-width="1.2" stroke-dasharray="3.6 2.4" fill="none"/>
<path d="M326 38.3H494" stroke="#b3bfce" stroke-width="1.2" stroke-dasharray="3.6 2.4" fill="none"/>
<path d="M607.5 38.3H776" stroke="#b3bfce" stroke-width="1.2" stroke-dasharray="3.6 2.4" fill="none"/>
<path d="M916 38.0H1084" stroke="#a9b6c6" stroke-width="1.1" fill="none"/>
<path d="M1211 38.0H1378.5" stroke="#a9b6c6" stroke-width="1.1" fill="none"/>
</svg>
</div>
<div class="edge-l"></div>
</div>
</body></html>
